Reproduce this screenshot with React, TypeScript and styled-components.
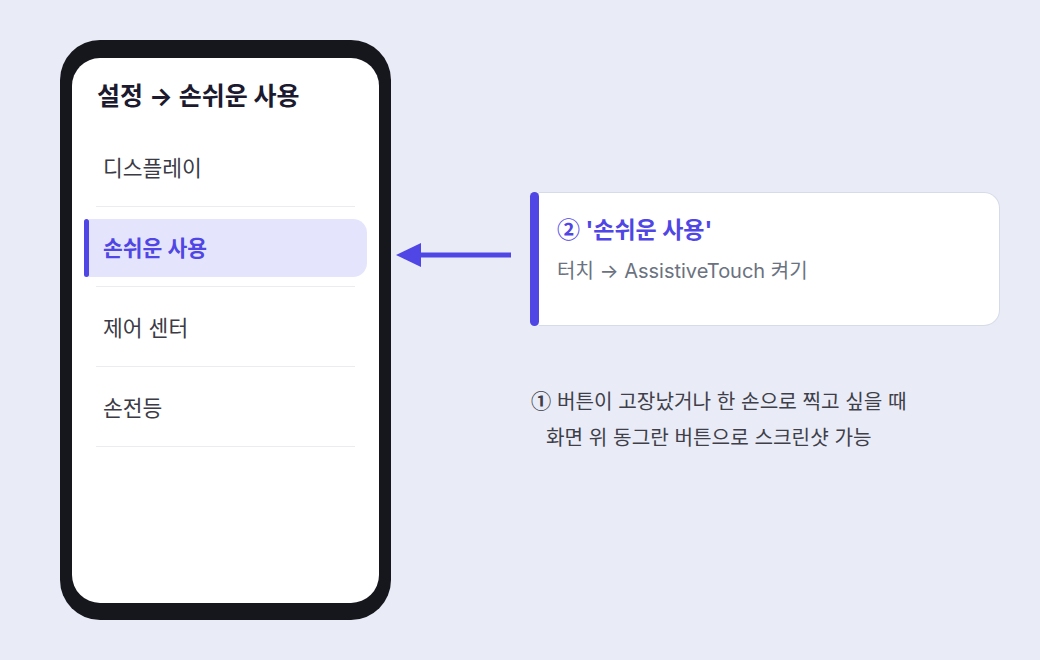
import React from "react";
import styled, { createGlobalStyle } from "styled-components";

const Global = createGlobalStyle`
  html, body { margin: 0; padding: 0; }
  body {
    background: #e9ecf6;
    font-family: "Inter", "Noto Sans CJK KR", sans-serif;
    width: 1040px;
    height: 660px;
    overflow: hidden;
  }
`;

const Page = styled.div`
  display: flex;
  align-items: flex-start;
  padding: 40px 60px;
  box-sizing: border-box;
  width: 1040px;
  height: 660px;
`;

const Phone = styled.div`
  width: 331px;
  height: 580px;
  box-sizing: border-box;
  background: #16161d;
  border-radius: 40px;
  padding: 18px 12px 17px;
  flex-shrink: 0;
  display: flex;
`;

const Screen = styled.div`
  flex: 1;
  background: #ffffff;
  border-radius: 28px;
  padding: 24px 24px;
  display: flex;
  flex-direction: column;
`;

const Heading = styled.h1`
  margin: 0 0 17px;
  font-size: 25px;
  line-height: 28px;
  font-weight: 700;
  color: #1b1a2e;
  padding-left: 1px;
`;

const List = styled.ul`
  list-style: none;
  margin: 0;
  padding: 0;
`;

const Row = styled.li`
  padding: 12px 0 9px;
  border-bottom: 1px solid #ececf0;
`;

const Item = styled.div<{ $active?: boolean }>`
  display: flex;
  align-items: stretch;
  height: 58px;
  margin: 0 ${(p) => (p.$active ? "-12px" : "0")};
`;

const ItemBar = styled.span`
  width: 5px;
  border-radius: 3px;
  background: #4f46e5;
  flex-shrink: 0;
`;

const ItemLabel = styled.span<{ $active?: boolean }>`
  flex: 1;
  display: flex;
  align-items: center;
  box-sizing: border-box;
  padding-bottom: 4px;
  font-size: 21.5px;
  font-weight: ${(p) => (p.$active ? 700 : 400)};
  color: ${(p) => (p.$active ? "#4f46e5" : "#3b3b45")};
  background: ${(p) => (p.$active ? "#e4e5fc" : "transparent")};
  border-radius: ${(p) => (p.$active ? "0 14px 14px 0" : "0")};
  padding-left: ${(p) => (p.$active ? "14px" : "7px")};
`;

const Side = styled.div`
  display: flex;
  flex-direction: column;
  padding-top: 152px;
`;

const CalloutRow = styled.div`
  display: flex;
  align-items: flex-start;
`;

const Arrow = styled.svg`
  width: 117px;
  height: 26px;
  margin: 50px 18px 0 4px;
  flex-shrink: 0;
`;

const Card = styled.div`
  display: flex;
  width: 470px;
  height: 134px;
`;

const CardBar = styled.span`
  width: 9px;
  border-radius: 5px;
  background: #4f46e5;
  flex-shrink: 0;
`;

const CardBody = styled.div`
  flex: 1;
  background: #ffffff;
  border: 1.5px solid #d6dbea;
  border-left: none;
  border-radius: 0 16px 16px 0;
  padding: 21px 18px 0;
  display: flex;
  flex-direction: column;
`;

const CardTitle = styled.div`
  font-size: 23px;
  line-height: 28px;
  font-weight: 700;
  color: #4f46e5;
`;

const CardSub = styled.div`
  margin-top: 15px;
  font-size: 20px;
  line-height: 24px;
  color: #6b7280;
`;

const Circled = styled.span`
  font-family: "Noto Sans CJK KR", sans-serif;
  font-weight: 700;
`;

const Note = styled.div`
  margin: 57px 0 0 140px;
  font-size: 20.2px;
  line-height: 36px;
  color: #3f3f4a;
`;

const NoteLine = styled.div<{ $indent?: boolean }>`
  padding-left: ${(p) => (p.$indent ? "15px" : "0")};
`;

const items = ["디스플레이", "손쉬운 사용", "제어 센터", "손전등"];

export default function App() {
  return (
    <>
      <Global />
      <Page>
        <Phone>
          <Screen>
            <Heading>설정 → 손쉬운 사용</Heading>
            <List>
              {items.map((t) => {
                const active = t === "손쉬운 사용";
                return (
                  <Row key={t}>
                    <Item $active={active}>
                      {active && <ItemBar />}
                      <ItemLabel $active={active}>{t}</ItemLabel>
                    </Item>
                  </Row>
                );
              })}
            </List>
          </Screen>
        </Phone>
        <Side>
          <CalloutRow>
            <Arrow viewBox="0 0 117 26">
              <rect x="24" y="10.5" width="92" height="5" fill="#4f46e5" />
              <polygon points="1,13 26,1 26,25" fill="#4f46e5" />
            </Arrow>
            <Card>
              <CardBar />
              <CardBody>
                <CardTitle>
                  <Circled>②</Circled> '손쉬운 사용'
                </CardTitle>
                <CardSub>터치 → AssistiveTouch 켜기</CardSub>
              </CardBody>
            </Card>
          </CalloutRow>
          <Note>
            <NoteLine>
              <Circled>①</Circled> 버튼이 고장났거나 한 손으로 찍고 싶을 때
            </NoteLine>
            <NoteLine $indent>화면 위 동그란 버튼으로 스크린샷 가능</NoteLine>
          </Note>
        </Side>
      </Page>
    </>
  );
}
